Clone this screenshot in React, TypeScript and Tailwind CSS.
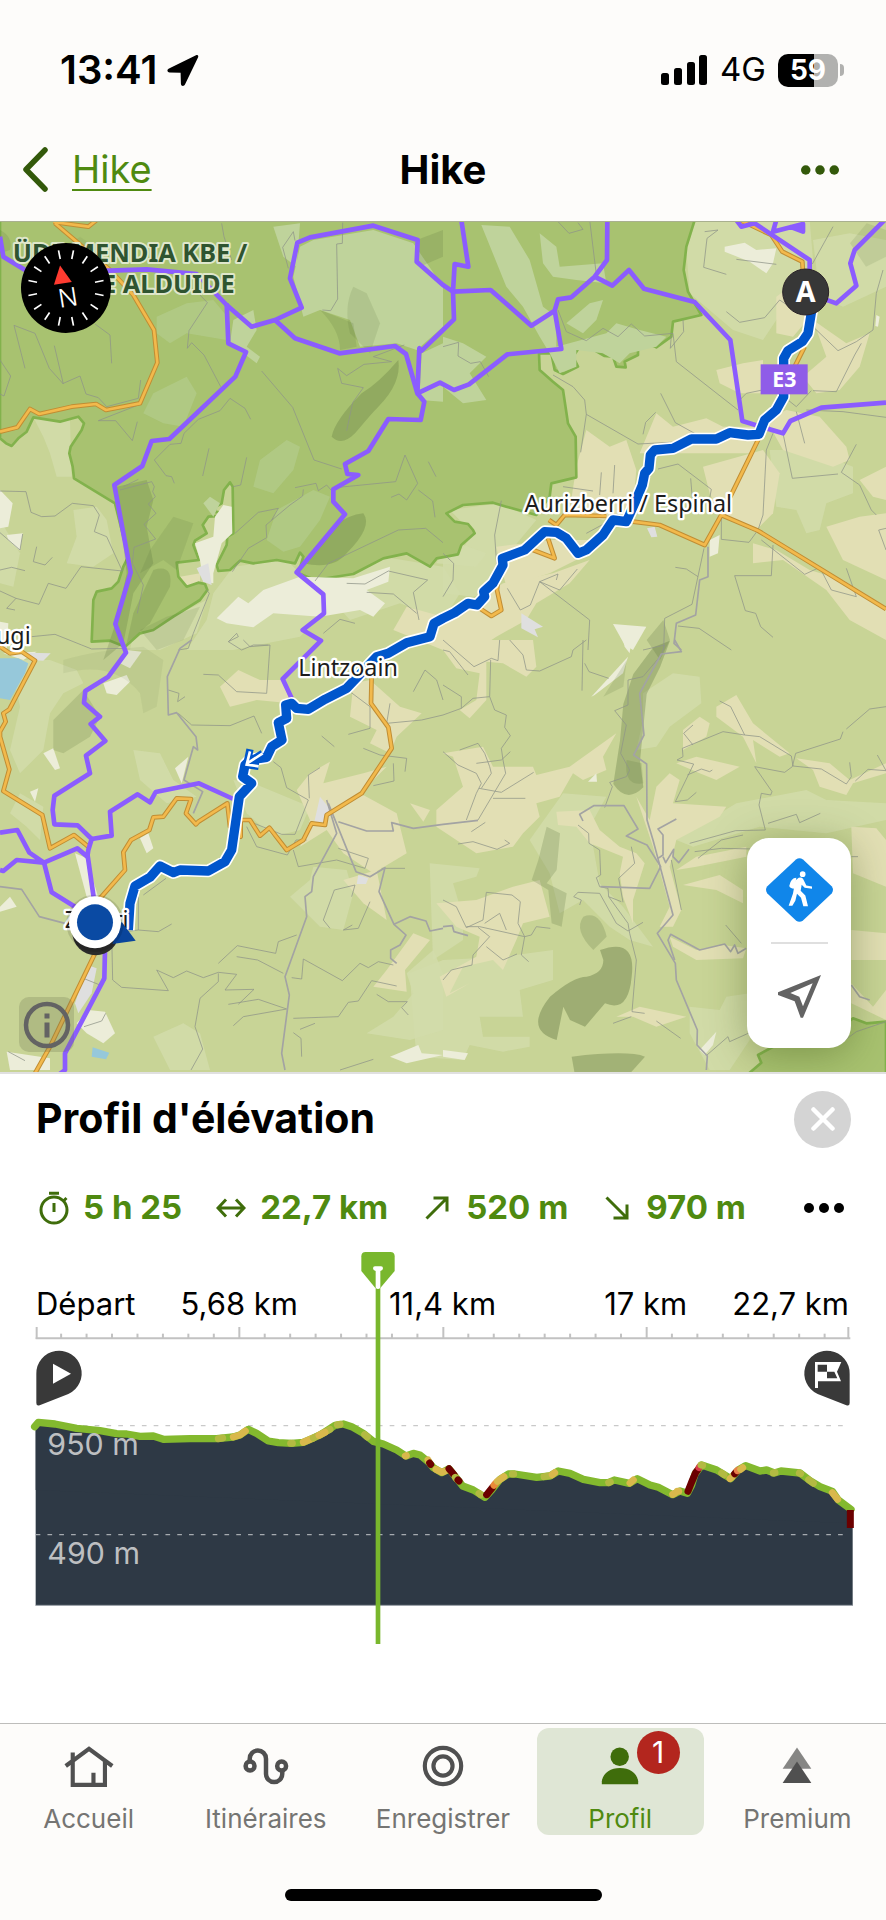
import React from "react";

type Offset = [number, number];

/* The map is drawn from four sheets; each offset places a sheet on the common canvas. */
const NW: Offset = [0, 0];
const NE: Offset = [1329, 0];
const SW: Offset = [0, 1260];
const SE: Offset = [1329, 1260];

function points(...parts: [string, Offset][]): string {
  return parts
    .map(([text, [dx, dy]]) =>
      text
        .trim()
        .split(/\s+/)
        .map((pair) => {
          const [x, y] = pair.split(",").map(Number);
          return `${x + dx},${y + dy}`;
        })
        .join(" ")
    )
    .join(" ");
}

const forest = points(
  ["0,0 0,655 18,670 35,678 55,655 80,635 100,592 180,605 235,590 252,610 245,630 212,680 208,700 218,740 222,775 345,850 385,1010 370,1040 355,1085 335,1105 290,1115 280,1140 275,1265 330,1262 375,1280 420,1240 460,1230 520,1190 600,1140 622,1110 615,1092 595,1088 560,1100 535,1070 530,1028 597,1020 580,975 585,962 620,940 608,915 625,890 660,888 662,878 645,875 648,860 665,850 672,810 690,787 698,800 700,940 682,950 680,975 650,1035 655,1053 690,1050 720,1022 760,1030 830,1020 885,1030 900,998 910,1010 895,1060 945,1080 1060,1062 1150,1015 1220,1000 1290,1040 1310,1015", NW],
  ["45,1003 55,975 95,940 90,930 75,912 35,905 10,880 60,855 150,848 190,860 280,885 320,830 325,790 400,772 398,650 375,610 360,510 330,485 290,450 288,400 325,400 335,450 360,462 405,440 390,410 410,380 450,388 485,408 510,410 520,440 548,442 545,425 585,405 585,360 640,382 685,350 690,305 775,285 735,215 722,150 730,80 755,0", NE]
);

const forestSouth = points(["918,1300 955,1268 945,1245 1000,1215 1150,1190 1230,1135 1270,1150 1329,1145 1329,1300", SE]);

const meadow: string[] = [
  points(["100,592 180,605 210,600 215,770 170,770 150,700 130,650", NW]),
  points(["220,870 290,860 320,900 340,1000 280,1040 200,1030 230,950", NW]),
  points(["640,1120 700,1040 860,1020 900,1060 960,1120 970,1180 900,1250 700,1290 560,1290 620,1200", NW]),
  points(["960,1100 1150,1010 1329,1040 1380,1120 1329,1200 1200,1150 1050,1200", NW]),
  points(["0,900 60,1000 40,1100 0,1090", NW]),
  points(["400,1240 520,1190 620,1140 590,1240 480,1290 390,1290", NW]),
  points(["760,0 1100,0 1110,120 1000,300 960,360 870,330 740,220 730,90", NE]),
  points(["1110,60 1220,40 1329,60 1329,200 1200,260 1130,230", NE]),
  points(["20,870 170,850 280,900 180,1020 160,1110 90,1130 0,1120 0,1000 50,1000 90,940", NE]),
  points(["980,690 1100,690 1230,740 1230,820 1150,850 1130,930 1090,940 1060,870 1000,860", NE]),
  points(["-20,1030 100,1040 130,1000 20,960", NE]),
  points(["600,160 690,100 770,110 775,190 680,260 640,320 580,330 600,240", SE]),
  points(["260,600 360,460 490,470 440,560 470,730 540,800 630,920 560,900 500,860 420,780 350,820 320,700", SE]),
  points(["-40,670 110,685 100,710 30,730 60,830 60,900 -30,960", SE]),
  points(["-100,1000 0,960 180,950 330,930 330,1020 230,1050 240,1130 110,1130 120,1190 260,1190 260,1220 180,1235 80,1215 60,1260 -80,1250", SE]),
  points(["700,600 880,490 1090,450 1150,480 1329,490 1329,540 1150,580 950,560 750,620", SE]),
  points(["740,1100 830,1110 850,1070 920,1060 920,1200 860,1290 800,1290 740,1180", SE]),
  points(["400,330 480,340 520,420 590,470 500,490 420,420", SW]),
  points(["30,60 150,60 230,90 250,130 190,160 150,220 130,330 60,400 30,330 60,200", SW]),
  points(["60,460 130,500 120,600 80,560 30,520", SW]),
  points(["940,680 1040,690 1060,760 1030,870 960,860 870,770 930,720", SW]),
  points(["1220,1000 1300,930 1329,1000 1329,1170 1230,1200 1100,1180 1180,1130 1240,1060", SW]),
  points(["460,1190 550,1150 600,1180 630,1290 510,1290", SW]),
  points(["700,420 760,430 930,500 900,570 820,590 740,520", SW]),
];

const clearings: string[] = [
  points(["940,60 1120,30 1240,70 1329,200 1329,320 1250,390 1190,370 1080,380 1050,300 960,270 910,290 880,170 900,80", NW]),
  points(["1265,400 1329,370 1329,545 1260,540 1260,500", NW]),
  points(["700,300 760,270 770,330 740,380 780,410 770,430 730,400 690,370", NW]),
  points(["820,20 900,10 890,140 850,110", NW]),
  points(["610,850 630,830 660,850 640,890", NW]),
  points(["115,15 200,20 260,120 300,260 340,290 340,380 490,340 520,310 590,330 670,350 640,380 560,400 530,430 480,400 400,390 400,440 350,460 320,400 290,350 240,260 190,200", NE]),
  points(["290,40 340,80 350,140 480,130 490,190 400,180 330,170 300,130", NE]),
  points(["0,350 60,370 130,410 80,460 130,540 60,550 0,500", NE]),
  points(["370,310 440,250 480,240 460,300 420,340", NE]),
];

const softClearings: string[] = [
  points(["470,290 560,250 640,240 690,300 680,360 560,340 510,370 470,340", NW]),
  points(["460,520 560,470 590,520 550,620 490,610 430,580", NW]),
  points(["830,870 940,810 990,830 960,900 900,980 850,995 800,960", NW]),
  points(["780,720 860,660 900,680 880,750 820,820 760,800", NW]),
];

const pale: string[] = [
  points(["0,810 38,850 25,920 0,925", NW]),
  points(["20,945 68,940 60,992 25,960", NW]),
  points(["645,890 670,855 695,860 697,940 665,970 640,1060 640,1090 610,1085 600,1020 585,970 640,950", NW]),
  points(["650,1195 715,1130 745,1150 790,1110 900,1070 1060,1075 1170,1040 1165,1085 1100,1110 1155,1150 1120,1190 1080,1170 960,1190 820,1180 760,1222 680,1210", NW]),
  points(["0,1205 25,1210 20,1290 0,1290", NW]),
  points(["845,80 905,68 940,90 1000,85 990,130 970,160 920,125 845,95", NE]),
  points(["510,1212 610,1220 570,1290 545,1275", NE]),
  points(["800,960 830,945 825,1000 800,1010", NE]),
  points(["1300,285 1310,290 1305,320 1297,318", NE]),
  points(["540,0 565,0 560,40 545,20", SE]),
  points(["445,170 555,50 540,100 455,165", SE]),
  points(["435,425 460,400 462,425", SE]),
  points(["0,1230 75,1240 65,1260 0,1250", SE]),
  points(["770,1230 820,1175 810,1215 785,1245", SE]),
  points(["380,30 425,35 390,85 360,70", SW]),
  points(["310,130 380,105 390,125 350,165 320,160", SW]),
  points(["130,340 160,325 180,385 165,390", SW]),
  points(["525,385 565,350 545,430", SW]),
  points(["90,455 115,445 105,485", SW]),
  points(["420,595 445,580 460,625 440,640", SW]),
  points(["225,640 260,655 300,790 260,770", SW]),
  points(["20,1235 150,1255 150,1290 30,1290", SW]),
  points(["265,1110 315,1115 345,1180 310,1210 260,1180 230,1150", SW]),
  points(["1170,1250 1255,1215 1265,1240 1329,1245 1220,1270", SW]),
  points(["0,800 30,770 50,800 0,815", SW]),
  points(["10,40 110,35 70,60", SW]),
];

const fields: string[] = [
  points(["540,1070 600,1060 600,1090 550,1105", NW]),
  points(["1220,1160 1329,1190 1329,1290 1180,1230", NW]),
  points(["1000,230 1080,170 1110,280 1050,350 1000,340", NE]),
  points(["1110,300 1210,370 1280,340 1250,440 1190,510 1120,520 1080,470 1150,410", NE]),
  points(["820,450 900,430 960,420 960,520 890,520 830,490", NE]),
  points(["430,630 500,680 550,660 580,750 570,860 600,850 480,900 380,870 400,740", NE]),
  points(["640,580 690,620 790,595 840,620 960,620 920,700 780,700 590,700", NE]),
  points(["780,740 960,690 1010,760 990,880 940,930 830,880 800,820", NE]),
  points(["1030,570 1130,590 1210,680 1220,720 1170,740 1020,690 970,600", NE]),
  points(["1150,920 1250,890 1329,880 1329,1080 1200,1020", NE]),
  points(["930,970 1000,990 1100,1050 1200,1080 1329,1160 1329,1260 1220,1200 1150,1110 1020,1020 930,1030", NE]),
  points(["1250,780 1329,740 1329,840 1290,830", NE]),
  points(["60,1170 180,1090 330,1060 440,1020 380,1090 280,1150 250,1200 160,1250 100,1290 0,1290 0,1200", NE]),
  points(["160,980 330,960 490,960 440,1000 320,1060 190,1100", NE]),
  points(["0,0 270,0 280,80 250,110 180,70 130,65 130,180 80,235 50,210 100,180 110,100 40,85 0,30", SE]),
  points(["820,200 880,165 930,250 1040,340 1010,350 930,300 940,370 900,290 820,230", SE]),
  points(["720,270 770,230 800,250 790,290 720,330", SE]),
  points(["700,370 760,350 890,380 820,420 770,400", SE]),
  points(["1060,355 1160,370 1220,420 1329,370 1329,400 1230,430 1210,465 1130,440 1110,390", SE]),
  points(["-20,510 60,440 30,350 0,340 120,320 150,380 270,380 280,405 380,380 520,280 480,350 490,390 420,420 390,400 350,470 280,490 290,530 240,580 210,620 100,640 -20,560", SE]),
  points(["340,515 440,510 470,570 530,620 580,640 605,670 570,780 570,850 540,770 530,700 540,650 440,610 400,560 345,555", SE]),
  points(["580,470 620,540 640,440 680,400 710,420 690,490 850,500 830,530 700,600 680,680 715,810 690,860 650,860 680,800 630,620", SE]),
  points(["760,650 910,620 910,650 760,680 700,690", SE]),
  points(["720,735 830,705 900,750 900,790 820,750", SE]),
  points(["-20,790 100,780 210,740 290,720 320,830 240,850 220,900 180,990 150,960 60,980 20,1060 80,1030 10,1070 -10,1010 100,950 110,890 40,860", SE]),
  points(["680,890 760,930 840,915 910,925 900,955 760,960 690,920", SE]),
  points(["1225,560 1300,565 1329,600 1329,740 1230,700", SE]),
  points(["1225,870 1329,880 1329,960 1225,960", SE]),
  points(["1225,1030 1290,1100 1329,1050 1329,1140 1225,1090", SE]),
  points(["520,1130 590,1100 730,1130 640,1160 570,1130", SE]),
  points(["660,140 715,90 780,120 850,120 870,190 770,180 690,200", SW]),
  points(["1060,130 1110,120 1200,200 1265,220 1190,290 1170,340 1110,310 1130,270 1050,230", SW]),
  points(["930,400 990,365 970,430 1090,400 1160,380 1080,460 1190,520 1220,640 1120,700 1030,640 980,570 900,620 930,540 890,450", SW]),
  points(["1030,720 1130,690 1160,840 1090,790", SW]),
  points(["1160,990 1240,880 1290,900 1215,990 1220,1055 1120,1040", SW]),
  points(["1230,490 1290,510 1270,545", SW]),
];

const shade: { d: string; o: string }[] = [
  { d: "M1195 420q-60 70-110 100-80 80-90 130 30 30 70-10 50-60 70-80 70-70 60-140z", o: ".25" },
  { d: "M1060 200q-30 60-10 140l60 60 30-90-40-90z", o: ".13" },
  { d: "M1090 880q-90 10-150 120l-30 30q90 20 130-30 80-80 50-120z", o: ".24" },
  { d: "M960 270q60 60 60 120l50-10-10-70z", o: ".15" },
  { d: "M350 800l90-20 20 60-20 80 20 110-60 90-30 150-60 50 40-120 30-140z", o: ".2" },
  { d: "M460 1050q60-20 50 50l-60 110-70 60 20-90z", o: ".18" },
  { d: "M420 1230l80-40 100-30-50 100-80 30z", o: ".12" },
  { d: "M180 90l60-40 90 60-30 60-90-20z", o: ".08" },
  { d: "M520 890l60 20-50 140-40-30-70 40 30-70z", o: ".12" },
  { d: "M0 30q40 20 30 60l-30 10z", o: ".15" },
  { d: "M1250 60l79-30v80l-70 30z", o: ".16" },
  { d: "M160 1500l90-90 50 80-30 60-80 50-30-10z", o: ".17" },
  { d: "M190 1320q100-30 240-40l60 40-20 140-40 20-10-60q-80-100-230-60z", o: ".08" },
  { d: "M2010 1262l-50 20-60 80-30 90-10 110-20 130q40 60 90 10l-10-80 20-200 40-80z", o: ".28" },
  { d: "M1880 1320l-70 110 60-30zM1880 1620q-10 80 50 70l-5-60z", o: ".15" },
  { d: "M1640 1820l40 20-10 110-30 40 60 30-15 100-30-10-10-100-50-30 20-60z", o: ".2" },
  { d: "M1750 2090q50-20 70 60l-40 40q-60-60-30-100z", o: ".2" },
  { d: "M1800 2190q110-40 95 80-10 110-80 80l-60 70-45-20-20-40-20 100q-100-30-20-130 70-60 110-60 50-10 50-50z", o: ".34" },
  { d: "M1715 2510q170-20 220 0l-50 56h-160z", o: ".3" },
  { d: "M1940 1260l50-60 20 60-30 60z", o: ".2" },
  { d: "M2550 70l50-60 58 20v80l-60 30z", o: ".12" },
];

const paths: string[] = [
  points(["0,420 32,468 12,528 0,522", NW]),
  points(["75,445 42,316 105,340 148,445 190,492 163,377", NW]),
  points(["190,490 240,468 258,522 295,533 320,560 415,535 422,480", NW]),
  points(["285,312 330,345 335,430", NW]),
  points(["600,225 622,248 567,332 562,385 575,368 612,405 662,500", NW]),
  points(["785,453 878,562 942,720 1025,747", NW]),
  points(["412,605 397,662 347,602 295,602 415,555", NW]),
  points(["752,598 735,565 690,535 660,572 595,598 552,640 543,670 510,673 463,720 498,767 515,770 523,790", NW]),
  points(["627,685 608,768", NW]),
  points(["740,712 722,795 700,800", NW]),
  points(["360,810 455,785 463,800 458,815 466,830 445,852 468,880 432,913 467,957 402,982 397,1030 430,1095 412,1180", NW]),
  points(["370,800 415,778", NW]),
  points(["0,813 78,815 93,877 125,890 165,888 217,850 280,857 298,885 283,935 320,950 367,1053 243,1040 198,1105 145,1090 117,1153 48,1135 0,1113", NW]),
  points(["0,938 60,990 68,942", NW]),
  points(["110,980 100,1025 135,1035 157,1012", NW]),
  points(["0,1050 35,1042 75,1052", NW]),
  points(["865,145 848,82 880,35 885,62", NW]),
  points(["1028,8 1027,70 1010,72 1013,237 992,272 967,270", NW]),
  points(["1213,375 1120,410 1175,425 1092,433 1040,467 1013,445 1025,490 1090,503 1058,548 1040,632", NW]),
  points(["1005,803 1187,785 1215,705 1253,790 1220,840 1197,822 1173,832", NW]),
  points(["885,803 948,790 955,812 980,795 1000,818", NW]),
  points(["910,808 908,828 870,855 798,915 800,953 745,985 697,1055", NW]),
  points(["705,940 775,877 835,865 815,900", NW]),
  points(["1255,810 1298,843 1305,892", NW]),
  points(["945,1083 985,1030 1195,930 1277,925 1329,968", NW]),
  points(["1040,1090 1095,1092 1165,1053 1283,1080 1240,1117 1257,1200", NW]),
  points(["1100,1117 1180,1122 1250,1180", NW]),
  points(["665,10 672,50 695,120", NW]),
  points(["620,1110 628,1120 580,1240 565,1285 535,1290", NW]),
  points(["95,1250 165,1243 245,1275 275,1287 375,1285", NW]),
  points(["45,1170 20,1165 48,1135", NW]),
  points(["685,1265 710,1240 715,1250 685,1265 725,1290 760,1275 805,1275", NW]),
  points(["970,1240 1020,1198 1065,1210", NW]),
  points(["1285,725 1308,770", NW]),
  points(["785,35 825,30 792,55 782,142 850,163", NE]),
  points(["850,275 890,307 965,293 1010,240 1040,260", NE]),
  points(["1170,20 1108,132", NE]),
  points(["880,118 1000,133", NE]),
  points(["440,0 462,180", NE]),
  points(["345,5 378,40 420,28 405,8", NE]),
  points(["345,270 370,335 430,362 480,325 525,350 565,312 605,348 690,340 700,425 885,570", NE]),
  points(["720,300 722,335 682,385 685,345", NE]),
  points(["0,380 47,367 45,408 83,430 112,425 137,470", NE]),
  points(["330,465 390,500 425,540 430,583 585,672 720,665", NE]),
  points(["653,520 697,608 760,643", NE]),
  points(["413,697 430,583", NE]),
  points(["600,643 608,607 638,577", NE]),
  points(["885,545 910,520 958,510", NE]),
  points(["1110,320 1185,392 1240,365 1290,330 1300,220 1320,150", NE]),
  points(["1255,370 1235,405 1180,515 1110,512", NE]),
  points(["1035,540 1060,560 1105,512", NE]),
  points(["1060,575 1085,670", NE]),
  points(["1090,570 1200,575 1329,592", NE]),
  points(["1020,640 1048,775 1185,762", NE]),
  points(["1240,673 1195,757 1250,795 1285,870 1300,885", NE]),
  points(["990,640 970,690 960,885 945,930 918,967 835,958 835,890", NE]),
  points(["645,747 705,732 805,808 800,835", NE]),
  points(["743,775 748,835", NE]),
  points(["515,735 510,820", NE]),
  points(["475,757 470,825", NE]),
  points(["360,800 450,813", NE]),
  points(["430,940 495,905", NE]),
  points(["783,985 747,1153 665,1195 662,1290", NE]),
  points(["990,975 985,1067 875,1067 907,1172 938,1180 953,1220 990,1252", NE]),
  points(["955,960 1085,1063 1130,1042 1165,1110 1240,1130", NE]),
  points(["1210,1045 1240,1130", NE]),
  points(["697,1042 730,1047 765,1070", NE]),
  points(["705,1218 768,1225 865,1290", NE]),
  points(["175,842 155,945 160,1020 165,1080", NE]),
  points(["403,1047 350,1110 290,1085 345,1062 340,1080", NE]),
  points(["290,1085 440,1200 435,1290", NE]),
  points(["193,1105 232,1170 262,1155 290,1085", NE]),
  points(["0,1000 32,1030 30,1080 0,1130", NE]),
  points(["1329,925 1307,930 1329,990", NE]),
  points(["0,0 93,80 145,55 165,62 170,0", SE]),
  points(["143,60 140,170 155,210 190,225 185,262 202,287 175,325 180,360 188,400 105,540", SE]),
  points(["200,0 240,45 250,90 290,93 385,50 390,30 430,0", SE]),
  points(["420,0 417,152", SE]),
  points(["425,70 438,95 497,115", SE]),
  points(["0,135 55,170 55,205 90,175 140,170", SE]),
  points(["0,225 55,205", SE]),
  points(["0,30 20,35 75,105", SE]),
  points(["0,335 45,375 100,400 115,430 100,460 70,540", SE]),
  points(["50,330 105,310 125,340 140,380 145,400 115,445", SE]),
  points(["100,370 175,360 202,335", SE]),
  points(["108,445 175,457 272,397", SE]),
  points(["150,475 247,475", SE]),
  points(["45,612 90,605 162,628 200,610 185,600", SE]),
  points(["85,575 127,547", SE]),
  points(["600,30 665,15 655,45 600,110 555,120 555,195 515,212 550,255 533,340 560,390 550,410 500,427 508,440 485,503", SE]),
  points(["830,183 863,200 905,285 840,275 718,325 720,350 702,360 752,372 697,485 733,480 760,457", SE]),
  points(["750,255 722,280 750,315", SE]),
  points(["905,285 950,290 1045,348 1050,378 1135,387 1210,432 1225,410 1220,367", SE]),
  points(["1329,200 1280,207 1210,267", SE]),
  points(["1200,275 1192,297 1058,340 1048,380 1025,397 935,380 987,455 983,465 955,460 948,495 967,570 878,572 740,610", SE]),
  points(["975,550 1060,523 1070,548 1132,520", SE]),
  points(["1237,423 1275,388 1329,392 1303,345", SE]),
  points(["733,405 775,387 800,395 808,390", SE]),
  points(["755,635 835,625 932,627", SE]),
  points(["765,655 835,600 900,585", SE]),
  points(["405,555 437,580 438,610 470,630 473,705 460,713 470,740 495,745 497,770 535,785", SE]),
  points(["565,620 575,670 527,715 540,787", SE]),
  points(["410,795 415,780 392,770 405,757 470,760 520,850 555,873 600,847", SE]),
  points(["497,770 555,850 560,880 580,960 567,1115 605,1120", SE]),
  points(["510,1150 565,1130", SE]),
  points(["640,1143 713,1195", SE]),
  points(["0,780 40,800 70,863 120,840 130,757 207,765 232,785 225,850 245,890 235,945 257,965", SE]),
  points(["0,1020 25,990 87,975 90,945 140,890 105,862", SE]),
  points(["70,860 110,860 245,890 265,885 280,860 322,865", SE]),
  points(["125,850 170,820 190,870", SE]),
  points(["130,920 180,960 222,942", SE]),
  points(["685,660 715,810", SE]),
  points(["792,1245 855,1190 860,1205 920,1178", SE]),
  points(["848,855 895,910", SE]),
  points(["1180,1220 1240,1175 1329,1145", SE]),
  points(["1225,650 1245,650", SE]),
  points(["610,103 655,105 710,155 800,160 810,15 750,20 730,0", SW]),
  points(["535,220 575,255 690,257 762,228 785,280", SW]),
  points(["505,150 537,160 533,185 555,170", SW]),
  points(["965,288 1003,320", SW]),
  points(["1050,155 1110,200 1110,265 1045,283", SW]),
  points(["1090,325 1140,345 1220,355 1215,395", SW]),
  points(["1180,370 1182,423 1120,437", SW]),
  points(["820,365 843,383 860,443 925,480 885,583 845,583 750,545", SW]),
  points(["960,383 925,405 928,475", SW]),
  points(["740,560 770,620 862,645 888,600 920,600", SW]),
  points(["880,630 895,680 1010,660 1095,685 1105,655 1015,625", SW]),
  points(["1003,750 1065,735 1055,770", SW]),
  points(["1003,750 970,840 990,865", SW]),
  points(["415,770 415,870 335,880 338,1020 365,1042 505,1052 470,990 520,1013 560,993 610,1013 655,997 710,1003 675,1050 762,1048 715,1093", SW]),
  points(["415,870 475,875 515,852", SW]),
  points(["498,715 430,765", SW]),
  points(["655,970 712,917 827,940 835,905 890,885", SW]),
  points(["710,950 773,960 850,1000", SW]),
  points(["655,1000 655,1025 600,1075 585,1160 608,1227 573,1290", SW]),
  points(["700,1157 730,1130 860,1107 775,1078 685,1093", SW]),
  points(["880,1135 1015,1130 1045,1087 1075,1083 1115,1022 1190,1038", SW]),
  points(["875,1013 905,1017 910,957 1027,1022 1080,970 1105,983 1135,965 1180,975", SW]),
  points(["1110,785 1075,865 1030,870 1057,855", SW]),
  points(["1130,1063 1165,1085 1222,1085 1205,1103 1225,1125", SW]),
  points(["900,1168 945,1150", SW]),
  points(["880,1178 903,1195 905,1250", SW]),
  points(["1020,1290 1120,1258", SW]),
  points(["1145,685 1215,685", SW]),
  points(["1170,190 1160,250 1265,240 1329,225", SW]),
  points(["1240,155 1275,90 1310,120 1329,180", SW]),
  points(["250,1015 300,1035 318,1020", SW]),
  points(["252,1160 305,1143 317,1120", SW]),
  points(["25,1235 75,1262", SW]),
];

const lanes: string[] = [
  points(["575,0 540,25 502,110 505,225 530,218 588,290 593,330 580,320 552,420 608,455 580,520", SW]),
  points(["0,740 65,748 118,830 195,850", SW]),
  points(["1015,545 1100,573 1180,573 1175,548 1240,565 1329,553", SW]),
  points(["980,480 1010,580 940,710 935,755 915,770 920,830 855,1010 868,1065 845,1240 855,1290", SW]),
  points(["985,490 1068,695 1110,710 1155,683 1137,755 1182,853 1218,885 1200,915 1172,930 1172,955 1190,970", SW]),
  points(["1182,853 1230,830 1278,843 1290,873 1329,865", SW]),
  points(["795,980 795,1070 770,1080 758,1185 700,1210 693,1270 715,1290", NE]),
  points(["695,0 715,35 655,42 590,160 603,285 572,345 611,372 612,540 630,600 690,825 643,880 697,970 700,1020 763,1170 762,1215 793,1248 790,1290", SE]),
  points(["0,553 105,541", SE]),
  points(["420,543 410,523 452,497 543,497 585,567 550,588 612,615 653,680 620,745 473,740", SE]),
  points(["645,655 660,645 660,585 645,567 700,537", SE]),
  points(["660,650 668,668 692,628 690,650 707,668 738,628", SE]),
  points(["695,960 675,900 683,883 770,930 845,912 863,935 875,915 885,940 910,925", SE]),
  points(["0,860 28,857 33,875 75,887", SE]),
  points(["1225,1035 1250,1070 1280,1080", SE]),
];

const roads: string[] = [
  points(["160,6 265,20 290,0", NW]),
  points(["165,10 330,150 400,225 462,330 472,428 420,550 318,570 288,552 215,560 118,582 90,567 52,622 0,635", NW]),
  points(["890,0 985,45 1018,95 1078,125 1080,160", NE]),
  points(["1085,380 1050,450", NE]),
  points(["955,640 835,885 785,975 650,915 570,905", NE]),
  points(["835,885 945,932 1329,1167", NE]),
  points(["490,888 365,885 340,915 318,900", NE]),
  points(["315,955 335,1015 270,990", NE]),
  points(["165,1080 162,1110 175,1170 145,1188 110,1165", NE]),
  points(["0,20 30,40 65,35 105,62 28,208 10,220 17,245 0,275 0,290 28,388 10,453 127,525 150,625 222,585 265,620", SW]),
  points(["300,775 375,690 370,637 393,600 448,570 460,532 490,530 530,475 573,477 558,520 588,553 595,545 682,490 690,560 722,590 722,540 750,540 780,587 808,563 860,630 910,600 935,550 975,555 980,525 1085,460 1175,325 1165,262 1113,190 1115,100", SW]),
  points(["290,930 150,1220 105,1300", SW]),
];

const trails: string[] = [
  points(
    ["0,50 10,110 75,150 330,152 440,148 590,162 680,255 755,320 825,300 905,263 870,175 892,68 930,52 1120,17 1253,60 1250,125", NW],
    ["0,195 30,215 143,210 265,317 335,272 345,238 385,232 455,170 492,120 493,0", NE]
  ),
  points(["55,0 76,140 35,132 30,215 33,298 0,330", NE], ["1265,392 1258,385 1252,520", NW]),
  points(["825,300 885,355 1018,400 1185,378 1218,402 1252,520 1320,488", NW], ["33,510 78,493 193,403 355,387 335,272", NE]),
  points(
    ["680,250 685,370 738,396 706,470 508,657 455,663 427,738 343,795 392,1057 346,1212 366,1266", NW],
    ["378,38 325,110 256,153 252,188 300,230 272,252 316,303 258,347 270,400 163,467 158,510 163,553 233,556 275,597 335,587 330,515 413,463 450,487 467,456 597,430 700,477", SW]
  ),
  points(
    ["1252,520 1273,545 1262,600 1165,597 1105,693 1035,732 1042,762 1075,765 1000,808 1000,845 1035,883 890,1057 970,1123 972,1180 908,1230 963,1262", NW],
    ["848,117 875,175", SW]
  ),
  points(["455,170 508,197 558,150 603,206 755,246 862,360 898,603 1020,640 1042,603 1135,563 1329,548", NE]),
  points(["1100,160 1100,120 935,10 895,20 880,0", NE]),
  points(["1000,0 990,35 1080,12 1080,35 1040,20", NE]),
  points(["1130,232 1180,250 1240,197 1222,130 1235,90 1325,0", NE]),
  points(["0,578 52,570 88,638 132,668 50,660 10,693 0,690", SW]),
  points(["132,668 232,625 262,650 265,630 275,597", SW]),
  points(["132,668 155,757 225,800", SW]),
  points(["262,640 285,800", SW]),
  points(["315,930 313,1015 195,1240 195,1290 175,1305", SW]),
];

const route = points(
  ["1108,260 1095,340 1078,365 1035,392 1022,415 1022,530 1000,570 965,600 948,643 915,645 860,638 820,657 745,657 690,685 635,690 622,705 618,745 605,760 598,795 575,850 550,905 510,900 480,945 430,990 405,1000 370,955 340,937 305,935 245,990 205,1005 178,1015 180,1035 150,1090 122,1115 125,1130 102,1155 75,1150 35,1178 0,1195", NE],
  ["1302,1210 1290,1250 1220,1268 1165,1300", NW],
  ["1130,50 1040,145 975,178 925,208 890,205 875,190 857,195 860,235 835,248 846,300 815,320 800,352 750,360 735,375 728,410 755,430 718,470 695,630 675,665 625,693 540,690 520,698 480,678 450,712 405,738 390,790 385,870", SW]
);

const MapView = () => (
  <svg viewBox="0 6 2658 2550" preserveAspectRatio="xMidYMid slice" className="block h-auto w-full" role="img" aria-label="Carte de la randonnée">
    <rect x="-10" width="2680" height="2600" fill="#c8d496" />
    {meadow.map((p, i) => <polygon key={i} points={p} fill="#d2dcaa" opacity=".85" />)}
    {fields.map((p, i) => <polygon key={i} points={p} fill="#e2dfb4" />)}
    <g fill="#a8c270" stroke="#82b24c" strokeWidth="8" strokeLinejoin="round">
      <polygon points={forest} />
      <polygon points={forestSouth} />
    </g>
    {clearings.map((p, i) => <polygon key={i} points={p} fill="#bfd39b" />)}
    {softClearings.map((p, i) => <polygon key={i} points={p} fill="#b2cb88" opacity=".8" />)}
    {pale.map((p, i) => <polygon key={i} points={p} fill="#ecedd9" />)}
    {shade.map((s, i) => <path key={i} d={s.d} fill="#4d6330" opacity={s.o} />)}
    <g fill="#96c8da">
      <polygon points={points(["0,55 55,55 85,70 75,100 30,180 0,175", SW])} />
      <polygon points={points(["278,1222 328,1238 318,1258 275,1250", SW])} />
    </g>
    <g fill="#dfdfdf">
      <polygon points={points(["943,545 960,470 1000,520 970,545", SW])} />
      <polygon points={points(["1075,705 1105,715 1098,732 1070,732", SW])} />
      <polygon points={points(["262,975 290,985 275,1060 235,1120 225,1090", SW])} />
      <polygon points={points(["85,38 152,40 130,62 90,60", SW])} />
      <polygon points={points(["590,1045 625,1030 635,1095 610,1085", NW])} />
      <polygon points={points(["235,1180 300,1220 275,1228 285,1252 235,1225", NE])} />
      <polygon points={points(["612,925 635,920 643,950 625,952", NE])} />
    </g>
    <g fill="none" stroke="#8f9488" strokeLinejoin="round">
      {paths.map((p, i) => <polyline key={i} points={p} strokeWidth="3" opacity=".75" />)}
    </g>
    <g fill="none" stroke="#a3a3a3" strokeWidth="5" strokeLinejoin="round">
      {lanes.map((p, i) => <polyline key={i} points={p} />)}
    </g>
    <g fill="none" stroke="#c08d33" strokeWidth="14" strokeLinejoin="round">
      {roads.map((p, i) => <polyline key={i} points={p} />)}
    </g>
    <g fill="none" stroke="#f2b94c" strokeWidth="8" strokeLinejoin="round">
      {roads.map((p, i) => <polyline key={i} points={p} />)}
    </g>
    <g fill="none" stroke="#8b5cff" strokeWidth="14" strokeLinejoin="round">
      {trails.map((p, i) => <polyline key={i} points={p} />)}
    </g>

    <g fontFamily="Noto Sans, sans-serif" fontSize="76" fontWeight="700" fill="#2f5430" stroke="#dfe7cb" strokeWidth="12" paintOrder="stroke" strokeLinejoin="round">
      <text x="742" y="126" textAnchor="end">ÜDE MENDIA KBE /</text>
      <text x="704" y="220" textAnchor="end">MONTE ALDUIDE</text>
    </g>

    <polyline points={route} fill="none" stroke="#fff" strokeWidth="38" strokeLinejoin="round" />
    <polyline points={route} fill="none" stroke="#0056cc" strokeWidth="28" strokeLinejoin="round" />
    <path d="M788 1600l-46 30m8-42-10 46 36 5" fill="none" stroke="#0056cc" strokeWidth="22" strokeLinejoin="round" />
    <path d="M788 1600l-46 30m8-36-10 40 36 5" fill="none" stroke="#fff" strokeWidth="8" />

    <g fontFamily="Noto Sans, sans-serif" fontSize="70" fill="#1c1c1c" stroke="#fff" strokeWidth="14" paintOrder="stroke" strokeLinejoin="round">
      <text x="1885" y="876" textAnchor="middle">Aurizberri / Espinal</text>
      <text x="1044" y="1369" textAnchor="middle">Lintzoain</text>
      <text x="92" y="1272" textAnchor="end">ugi</text>
      <text x="290" y="2125" textAnchor="middle">Zubiri</text>
    </g>

    <rect x="2282" y="433" width="141" height="90" fill="#8f5ce8" />
    <text x="2353" y="502" fontFamily="Noto Sans, sans-serif" fontSize="64" fontWeight="700" textAnchor="middle" fill="#fff">E3</text>

    <circle cx="2417" cy="216" r="69" fill="#373737" stroke="#2a2228" strokeWidth="3" />
    <text x="2417" y="247" fontFamily="Noto Sans, sans-serif" fontSize="86" fontWeight="700" textAnchor="middle" fill="#fff">A</text>

    <circle cx="287" cy="2136" r="70" fill="#2b2b2b" />
    <path d="M365 2105l42 57-70 10z" fill="#0a459c" />
    <circle cx="285" cy="2110" r="86" fill="#000" opacity=".12" />
    <circle cx="285" cy="2107" r="78" fill="#fff" />
    <circle cx="285" cy="2107" r="54" fill="#0a4aa3" />
  </svg>
);

const Compass = () => (
  <svg viewBox="-134 -134 268 268" className="size-[90px]" aria-hidden="true">
    <circle r="134" fill="#000" />
    {Array.from({ length: 16 }, (_, i) => (
      <path key={i} d="M0-114v26" stroke="#fff" strokeWidth="5" transform={`rotate(${i * 22.5 + 11.25})`} />
    ))}
    <g transform="rotate(-9)">
      <path d="M-7-69l27 54h-54z" fill="#ff3b30" />
      <text x="1" y="56" fontFamily="Inter, sans-serif" fontSize="76" fontWeight="300" textAnchor="middle" fill="#fff">N</text>
    </g>
  </svg>
);

const GREEN = "#83b92e";
const OLIVE = "#b3ba42";
const GOLD = "#d9b84c";
const MAROON = "#6b0000";

const profile =
  "104,110 115,97 165,102 230,115 300,122 350,131 380,132 420,139 460,138 490,148 570,146 650,146 700,141 720,135 745,118 770,130 805,153 835,158 875,160 910,157 960,135 1005,106 1030,102 1055,110 1090,130 1120,154 1150,162 1190,180 1218,198 1240,190 1260,195 1288,218 1300,233 1325,248 1347,236 1370,265 1388,288 1420,300 1455,322 1475,300 1500,268 1525,252 1545,252 1610,262 1650,258 1675,243 1710,250 1750,268 1800,278 1825,278 1843,270 1888,280 1912,266 1950,285 1975,292 2018,314 2040,303 2062,310 2075,285 2085,252 2105,225 2150,240 2192,266 2215,240 2237,227 2280,243 2300,240 2323,249 2343,243 2400,249 2430,272 2460,290 2497,304 2515,330 2553,358";

const gradeRuns: [string, string][] = [
  ["655,146 668,144", OLIVE],
  ["700,141 720,135 736,123", GOLD],
  ["872,160 877,160", OLIVE],
  ["910,157 940,144", GOLD],
  ["940,144 990,118", OLIVE],
  ["957,136 975,127", GOLD],
  ["1012,104 1020,103", OLIVE],
  ["1094,134 1102,141", OLIVE],
  ["1216,198 1219,197", GOLD],
  ["1284,210 1286,214", GOLD],
  ["1289,219 1292,223", MAROON],
  ["1308,238 1326,247 1334,244", GOLD],
  ["1347,236 1362,254", MAROON],
  ["1366,262 1369,266", OLIVE],
  ["1374,270 1377,273", MAROON],
  ["1437,310 1442,314", OLIVE],
  ["1460,314 1478,292", MAROON],
  ["1482,286 1487,280", "#ea8a3a"],
  ["1492,274 1512,260", GOLD],
  ["1537,252 1541,252", OLIVE],
  ["1632,260 1652,256", OLIVE],
  ["1657,254 1664,248", GOLD],
  ["1826,278 1831,276", OLIVE],
  ["1890,279 1900,270", GOLD],
  ["2018,313 2024,310", GOLD],
  ["2032,304 2036,304", GOLD],
  ["2064,304 2075,276 2087,248 2093,240", MAROON],
  ["2097,233 2099,230", "#d63a4a"],
  ["2103,225 2108,226", OLIVE],
  ["2165,249 2172,254", OLIVE],
  ["2190,266 2196,261", GOLD],
  ["2204,251 2208,247", MAROON],
  ["2212,242 2216,240", "#e8804a"],
  ["2222,238 2228,233", GOLD],
  ["2320,249 2325,248", OLIVE],
  ["2398,249 2402,251", OLIVE],
  ["2426,269 2440,280", OLIVE],
  ["2497,308 2513,328", GOLD],
];

const majorTicks = [110, 718, 1330, 1940, 2545];

const ElevationChart = () => (
  <svg viewBox="0 -189 2658 948" className="block h-auto w-full" role="img" aria-label="Profil d'élévation du parcours">
    <g fill="none" stroke="#c2c2c2" strokeWidth="6">
      <path d="M107-155H2551" />
      {majorTicks.map((x) => <path key={x} d={`M${x}-189v36`} />)}
      {Array.from({ length: 31 }, (_, i) => i + 1)
        .filter((i) => i % 8 !== 0)
        .map((i) => <path key={i} d={`M${107 + i * 76.35}-169v16`} />)}
    </g>

    <g transform="translate(0 -960)">
      <path d="M109 911a68 68 0 1 1 96 61L119 1006q-10 3-10-7z" fill="#393939" />
      <path d="M159 881v60l54-30z" fill="#fff" />
    </g>
    <g transform="translate(1329 -960)">
      <path d="M1220 911a68 68 0 1 0-96 61l86 34q10 3 10-7z" fill="#393939" />
      <path d="M1116 876h79l-13 29 12 29h-69v20h-9z" fill="#fff" />
      <path d="M1124 884h28v21h-28zM1152 905h22l9 20h-31z" fill="#393939" />
    </g>

    <polygon points={`107,645 107,110 ${profile} 2558,400 2558,645`} fill="#2e3945" />
    <path d="M106 646H2559" stroke="#8b929b" strokeWidth="3" />
    <path d="M107 107H2537" stroke="#c9c9c9" strokeWidth="4" strokeDasharray="14 21.4" />
    <polygon points={`107,300 107,112 ${profile} 2558,400`} fill="#2e3945" />
    <path d="M107 434H2537" stroke="#a6abb0" strokeWidth="4" strokeDasharray="14 21.4" />
    <polyline points={profile} fill="none" stroke={GREEN} strokeWidth="22" strokeLinecap="round" strokeLinejoin="round" />
    {gradeRuns.map(([p, color]) => (
      <polyline key={p} points={p} fill="none" stroke={color} strokeWidth="21" strokeLinecap="round" strokeLinejoin="round" />
    ))}
    <path d="M2551 360v54" stroke={MAROON} strokeWidth="21" />
    <g fontFamily="Inter, sans-serif" fontSize="91" fill="#bdbfc1">
      <text x="142" y="195">950 m</text>
      <text x="142" y="521">490 m</text>
    </g>
  </svg>
);

const tabIcon = "h-[46px] w-[56px]";

const HomeIcon = () => (
  <svg viewBox="181 102 168 138" className={tabIcon} fill="none" stroke="#505050" strokeWidth="13" aria-hidden="true">
    <path d="M192 171l73-54 73 54M214 129v101h101v-78M279 192v38" />
  </svg>
);
const RouteIcon = () => (
  <svg viewBox="710 102 168 138" className={tabIcon} fill="none" stroke="#505050" strokeWidth="14" aria-hidden="true">
    <circle cx="744" cy="171" r="14" />
    <circle cx="843" cy="171" r="14" />
    <path d="M743 158v-10a25 25 0 0 1 51 0v48a25 25 0 0 0 51 0v-12" />
  </svg>
);
const RecordIcon = () => (
  <svg viewBox="-84 -69 168 138" className={tabIcon} fill="none" stroke="#505050" strokeWidth="13" aria-hidden="true">
    <circle r="57" />
    <circle r="30" />
  </svg>
);
const ProfileIcon = () => (
  <svg viewBox="447 102 168 138" className={tabIcon} fill="#3f6d0b" aria-hidden="true">
    <circle cx="530" cy="142" r="29" />
    <path d="M474 228v-9c3-26 27-42 57-42s54 16 57 42v9z" />
  </svg>
);
const PremiumIcon = () => (
  <svg viewBox="978 102 168 138" className={tabIcon} aria-hidden="true">
    <path d="M1062 113l45 67h-90z" fill="#868684" />
    <path d="M1062 157l45 67h-90z" fill="#505050" />
  </svg>
);

const tabs = [
  { label: "Accueil", Icon: HomeIcon },
  { label: "Itinéraires", Icon: RouteIcon },
  { label: "Enregistrer", Icon: RecordIcon },
  { label: "Profil", Icon: ProfileIcon, active: true, badge: 1 },
  { label: "Premium", Icon: PremiumIcon },
];

const Dots = ({ className }: { className: string }) => (
  <svg viewBox="0 0 40 10" className={className} fill="currentColor" aria-hidden="true">
    <circle cx="5" cy="5" r="5" />
    <circle cx="20" cy="5" r="5" />
    <circle cx="35" cy="5" r="5" />
  </svg>
);

const TimerIcon = () => (
  <svg viewBox="0 0 30 34" className="h-[34px] w-[30px]" fill="none" stroke="currentColor" strokeWidth="3" aria-hidden="true">
    <circle cx="15" cy="19" r="13" />
    <path d="M10 2.300h10M15 12v9M24.500 10l3-3" />
  </svg>
);
const DistanceIcon = () => (
  <svg viewBox="0 0 30 20" className="h-5 w-[30px]" fill="none" stroke="currentColor" strokeWidth="3" aria-hidden="true">
    <path d="M2 10h26M10 1.500L2 10l8 8.500M20 1.500L28 10l-8 8.500" />
  </svg>
);
const UpIcon = () => (
  <svg viewBox="0 0 24 24" className="size-6" fill="none" stroke="currentColor" strokeWidth="3" aria-hidden="true">
    <path d="M1.500 22.500L21.500 2.500M8.500 2h13.500v13.500" />
  </svg>
);
const DownIcon = () => (
  <svg viewBox="0 0 24 24" className="size-6" fill="none" stroke="currentColor" strokeWidth="3" aria-hidden="true">
    <path d="M1.500 1.500L21.500 21.500M8.500 22h13.500V8.500" />
  </svg>
);

const stats = [
  { label: "5 h 25", Icon: TimerIcon },
  { label: "22,7 km", Icon: DistanceIcon },
  { label: "520 m", Icon: UpIcon },
  { label: "970 m", Icon: DownIcon },
];

const StatusBar = () => (
  <div className="flex h-[118px] items-center justify-between pt-[22px] pr-[42px] pl-[60px]">
    <div className="flex items-center gap-2.5">
      <span className="text-[40px] font-semibold">13:41</span>
      <svg viewBox="0 0 32 32" className="size-8" aria-hidden="true">
        <path d="M29 1.300L2 14.500c-2.500 1.300-1.800 3.800.6 3.900l11 .3.300 11c.2 2.600 3 3 4.200.6L31 3.500c.8-1.700-.4-3-2-2.200z" />
      </svg>
    </div>
    <div className="flex items-center gap-3">
      <svg viewBox="0 0 47 30" className="h-[30px] w-[47px]" aria-hidden="true">
        <rect x="0" y="18" width="8" height="12" rx="2.500" />
        <rect x="13" y="13" width="8" height="17" rx="2.500" />
        <rect x="26" y="7" width="8" height="23" rx="2.500" />
        <rect x="38" y="0" width="8" height="30" rx="2.500" />
      </svg>
      <span className="text-[33px]">4G</span>
      <div className="flex items-center gap-0.5">
        <div className="flex h-[33px] w-[60px] items-center justify-center rounded-[10px] bg-linear-to-r from-black from-60% to-[#b1b1af] to-60% text-[28px] font-bold text-white">59</div>
        <div className="h-3 w-1 rounded-r-full bg-[#b1b1af]" />
      </div>
    </div>
  </div>
);

export default function App() {
  return (
    <div className="flex min-h-screen flex-col bg-[#fdfcfa] font-['Inter',sans-serif] text-black">
      <StatusBar />

      <header className="grid h-[104px] grid-cols-[1fr_auto_1fr] items-center border-b border-[#a9b08f]">
        <a href="#hike" className="flex items-center gap-[23px] justify-self-start pl-[22px] text-[38px] text-[#4f8a10]">
          <svg viewBox="0 0 27 45" className="h-[45px] w-[27px]" fill="none" stroke="#33590a" strokeWidth="5.500" strokeLinecap="round" strokeLinejoin="round" aria-hidden="true">
            <path d="M23 3L4 22.500 23 42" />
          </svg>
          <span className="underline decoration-2 underline-offset-[6px]">Hike</span>
        </a>
        <h1 className="text-[40px] font-bold">Hike</h1>
        <button type="button" aria-label="Plus d'options" className="justify-self-end pr-[47px] text-[#33590a]">
          <Dots className="h-[10px] w-[38px]" />
        </button>
      </header>

      <main className="flex flex-1 flex-col bg-white">
        <section className="relative overflow-hidden border-b-2 border-[#e0e0e0]">
          <MapView />
          <button type="button" aria-label="Boussole" className="absolute top-[21px] left-[21px]">
            <Compass />
          </button>
          <button type="button" aria-label="Informations" className="absolute bottom-5 left-[19px] flex size-[55px] items-center justify-center rounded-[10px] bg-[#66704c]/25">
            <svg viewBox="0 0 48 48" className="size-12" fill="none" stroke="#636363" strokeWidth="4.500" aria-hidden="true">
              <circle cx="24" cy="24" r="21" />
              <path d="M24 21.500v15M24 12.500v5" strokeWidth="5" />
            </svg>
          </button>
          <div className="absolute right-[35px] bottom-6 flex h-[210px] w-[104px] flex-col items-center rounded-[22px] bg-white shadow-[0_6px_40px_rgba(60,80,20,0.4)]">
            <button type="button" aria-label="Itinéraires de randonnée" className="flex flex-1 items-center">
              <svg viewBox="966 652 201 191" className="h-16 w-[67px]" aria-hidden="true">
                <path d="M1056 656q10-8 21 0l86 80q8 11 0 22l-86 81q-11 8-21 0l-86-81q-8-11 0-22z" fill="#1086ea" />
                <g fill="#fff">
                  <circle cx="1076" cy="700" r="8.500" />
                  <path d="M1064 711q8-3 13 3l10 20 17 3v7l-22-3-9-9-3 18 14 14 8 32h-14l-7-25-12-12-5 21-9 15h-11l13-37 7-39z" />
                  <path d="M1057 711q-17 1-21 24 0 8 16 9z" />
                </g>
              </svg>
            </button>
            <div className="h-0.5 w-[57px] bg-[#dfdfdf]" />
            <button type="button" aria-label="Ma position" className="flex flex-1 items-center">
              <svg viewBox="1002 1003 129 129" className="size-[43px]" aria-hidden="true">
                <path fillRule="evenodd" d="M1131 1003l-54 128h-7l-18-49-50-19v-8zm-25 25l-67 29 27 11 11 29z" fill="#636363" />
              </svg>
            </button>
          </div>
        </section>

        <section>
          <div className="flex h-[90px] items-center justify-between pr-[35px] pl-9">
            <h2 className="text-[41px] font-bold">Profil d&apos;élévation</h2>
            <button type="button" aria-label="Fermer" className="flex size-[57px] items-center justify-center rounded-full bg-[#d4d4d4]">
              <svg viewBox="0 0 24 24" className="size-6" stroke="#fff" strokeWidth="4.500" strokeLinecap="round" aria-hidden="true">
                <path d="M2.500 2.500l19 19M21.500 2.500l-19 19" />
              </svg>
            </button>
          </div>

          <div className="flex h-[88px] items-center justify-between pr-[42px] pl-[39px]">
            <ul className="flex items-center gap-[34px]">
              {stats.map(({ label, Icon }) => (
                <li key={label} className="flex items-center gap-[14px] text-[33px] font-bold whitespace-nowrap text-[#4f8a10]">
                  <span className="flex w-[30px] justify-center text-[#3f6d0b]"><Icon /></span>
                  {label}
                </li>
              ))}
            </ul>
            <button type="button" aria-label="Plus de statistiques">
              <Dots className="h-[10px] w-10" />
            </button>
          </div>

          <div className="relative">
            <div className="grid grid-cols-8 pt-8 pr-[37px] pb-[3px] pl-9 text-center text-[31px] leading-10 whitespace-nowrap">
              <span className="justify-self-start">Départ</span>
              <span className="col-span-2">5,68 km</span>
              <span className="col-span-2">11,4 km</span>
              <span className="col-span-2">17 km</span>
              <span className="justify-self-end">22,7 km</span>
            </div>
            <ElevationChart />
            <svg viewBox="0 0 102 1176" className="absolute top-0 left-[361px] h-[392px] w-[34px]" aria-hidden="true">
              <path d="M14 0h74q13 0 13 13v44L58 108H43L1 57V13Q1 0 14 0z" fill="#79b72d" />
              <path d="M51 100v1076" stroke="#79b72d" strokeWidth="14" />
              <path d="M42 43h18q6 0 6 6t-8 8v50q-7 8-14 0V57q-8-2-8-8t6-6z" fill="#fff" />
            </svg>
          </div>
        </section>
      </main>

      <nav className="border-t border-[#bdbdbb]">
        <div className="grid grid-cols-5">
          {tabs.map(({ label, Icon, active, badge }) => (
            <a
              key={label}
              href={`#${label.toLowerCase()}`}
              aria-current={active ? "page" : undefined}
              className={
                active
                  ? "relative mx-[5px] mt-1 flex h-[107px] flex-col items-center gap-[15px] rounded-xl bg-[#dfe6d5] pt-4 text-[26px] text-[#4f8a10]"
                  : "relative mx-[5px] mt-1 flex h-[107px] flex-col items-center gap-[15px] rounded-xl pt-4 text-[26px] text-[#757573]"
              }
            >
              <Icon />
              <span className="leading-8">{label}</span>
              {badge && (
                <span className="absolute top-[3px] left-[100px] flex size-[43px] items-center justify-center rounded-full bg-[#b3261e] text-[30px] text-white">{badge}</span>
              )}
            </a>
          ))}
        </div>
        <div className="flex h-[85px] items-end justify-center pb-[19px]">
          <div className="h-3 w-[317px] rounded-full bg-black" />
        </div>
      </nav>
    </div>
  );
}
